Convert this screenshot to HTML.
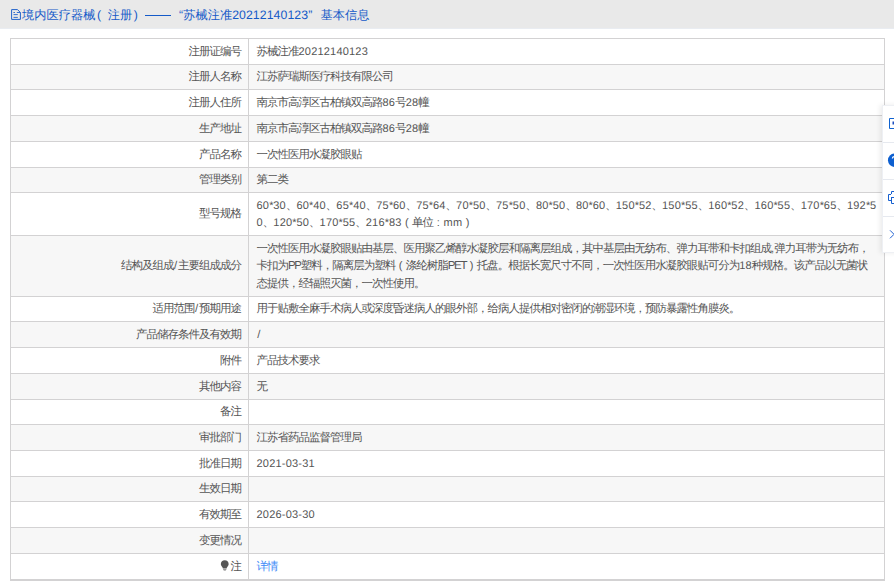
<!DOCTYPE html>
<html><head><meta charset="utf-8">
<style>
*{margin:0;padding:0;box-sizing:border-box}
html,body{width:894px;height:588px;overflow:hidden;background:#fff}
body{font-family:"Liberation Sans",sans-serif;color:#555;position:relative;text-rendering:geometricPrecision}
.hdr{position:absolute;left:0;top:0;width:894px;height:28px;background:#e9e9e9}
.hdrline{position:absolute;left:0;top:28px;width:894px;height:1px;background:#e9ecf1}
.title{position:absolute;left:11px;top:1px;height:28px;line-height:28px;color:#155ac8;white-space:nowrap}
.title span{display:inline-block;vertical-align:top}
.ficon{display:inline-block;vertical-align:top;margin-top:8px;margin-right:1px}
.hc{font-size:12.2px;letter-spacing:0.05px}
.hp{font-size:12.25px;width:12.25px;text-align:left;padding-left:1.5px}
.hd{width:26.5px;height:28px;background:linear-gradient(#155ac8,#155ac8) no-repeat 1px 14px / 26px 1px}
.hq{font-size:12.25px;width:12.25px}
.ha{font-size:12.25px;letter-spacing:0.1px}
.tbl{position:absolute;left:0;top:0;width:894px;height:588px}
.frame{position:absolute;left:10px;top:38px;width:875px;height:543px;border:1px solid #d3d2d3;border-bottom:2px solid #d3d2d3}
.r{position:absolute;left:10px;width:875px;border:1px solid #d3d2d3;border-bottom:none}
.r.g{background:#f7f7f7}
.l{position:absolute;left:0;top:0;bottom:0;width:238px;border-right:1px solid #d3d2d3;padding-right:7px;white-space:nowrap;display:flex;align-items:center;justify-content:flex-end}
.v{position:absolute;left:238px;top:0;bottom:0;right:0;padding-left:7.5px;white-space:nowrap;display:flex;align-items:center}
.ln{height:17.5px;line-height:17.5px;position:relative;top:-1.5px}
.c{font-size:11.5px;letter-spacing:-1.0px}
.a{font-size:11px;letter-spacing:0.2px}
.s{font-size:11px;letter-spacing:-0.15px}
.u{font-size:11.5px;letter-spacing:-1.3px}
.sl{font-size:11.5px;padding:0 0.7px}
.fp{display:inline-block;width:10.5px;text-align:center;font-size:11px}
.lk{color:#3d8af7}
.bulb{display:inline-block;vertical-align:-1px;margin-right:1px}
.side{position:absolute;left:882px;top:105px;width:40px;height:148px;background:#fff;box-shadow:-2px 0 5px rgba(0,0,0,0.08);border:1px solid #eef0f4}
.side div{position:absolute;left:0;width:40px;height:1px;background:#e6e9ef}
.side svg{position:absolute}
</style></head><body>
<div class="hdr"></div><div class="hdrline"></div>
<div class="title"><svg class="ficon" width="10" height="11" viewBox="0 0 10 11"><path d="M0.6 0.6h5.9l2.9 2.9v6.9H0.6z" fill="none" stroke="#155ac8" stroke-width="0.95"/><path d="M2.4 3.5h1.6M5.8 3.5h3.4M2.5 5.6h4.3M2.5 8.4h4.3" stroke="#155ac8" stroke-width="0.85"/></svg><span class="hc">境内医疗器械</span><span class="hp">(</span><span class="hc">注册</span><span class="hp">)</span><span class="hd"></span><span class="hq" style="text-align:right">“</span><span class="hc">苏械注准</span><span class="ha">20212140123</span><span class="hq" style="text-align:left">”</span><span class="hc">基本信息</span></div>
<div class="tbl">
<div class="r" style="top:38px;height:27px"><div class="l"><div class="ln"><span class="c">注册证编号</span></div></div><div class="v"><div><div class="ln"><span class="c">苏械注准</span><span class="a">20212140123</span></div></div></div></div>
<div class="r g" style="top:64px;height:26px"><div class="l"><div class="ln"><span class="c">注册人名称</span></div></div><div class="v"><div><div class="ln"><span class="c">江苏萨瑞斯医疗科技有限公司</span></div></div></div></div>
<div class="r" style="top:89px;height:27px"><div class="l"><div class="ln"><span class="c">注册人住所</span></div></div><div class="v"><div><div class="ln"><span class="c">南京市高淳区古柏镇双高路</span><span class="a">86</span><span class="c">号</span><span class="a">28</span><span class="c">幢</span></div></div></div></div>
<div class="r g" style="top:115px;height:27px"><div class="l"><div class="ln"><span class="c">生产地址</span></div></div><div class="v"><div><div class="ln"><span class="c">南京市高淳区古柏镇双高路</span><span class="a">86</span><span class="c">号</span><span class="a">28</span><span class="c">幢</span></div></div></div></div>
<div class="r" style="top:141px;height:27px"><div class="l"><div class="ln"><span class="c">产品名称</span></div></div><div class="v"><div><div class="ln"><span class="c">一次性医用水凝胶眼贴</span></div></div></div></div>
<div class="r g" style="top:167px;height:26px"><div class="l"><div class="ln"><span class="c">管理类别</span></div></div><div class="v"><div><div class="ln"><span class="c">第二类</span></div></div></div></div>
<div class="r" style="top:192px;height:44px"><div class="l"><div class="ln"><span class="c">型号规格</span></div></div><div class="v"><div><div class="ln"><span class="a">60</span><span class="s">*</span><span class="a">30</span><span class="c">、</span><span class="a">60</span><span class="s">*</span><span class="a">40</span><span class="c">、</span><span class="a">65</span><span class="s">*</span><span class="a">40</span><span class="c">、</span><span class="a">75</span><span class="s">*</span><span class="a">60</span><span class="c">、</span><span class="a">75</span><span class="s">*</span><span class="a">64</span><span class="c">、</span><span class="a">70</span><span class="s">*</span><span class="a">50</span><span class="c">、</span><span class="a">75</span><span class="s">*</span><span class="a">50</span><span class="c">、</span><span class="a">80</span><span class="s">*</span><span class="a">50</span><span class="c">、</span><span class="a">80</span><span class="s">*</span><span class="a">60</span><span class="c">、</span><span class="a">150</span><span class="s">*</span><span class="a">52</span><span class="c">、</span><span class="a">150</span><span class="s">*</span><span class="a">55</span><span class="c">、</span><span class="a">160</span><span class="s">*</span><span class="a">52</span><span class="c">、</span><span class="a">160</span><span class="s">*</span><span class="a">55</span><span class="c">、</span><span class="a">170</span><span class="s">*</span><span class="a">65</span><span class="c">、</span><span class="a">192</span><span class="s">*</span><span class="a">5</span></div><div class="ln"><span class="a">0</span><span class="c">、</span><span class="a">120</span><span class="s">*</span><span class="a">50</span><span class="c">、</span><span class="a">170</span><span class="s">*</span><span class="a">55</span><span class="c">、</span><span class="a">216</span><span class="s">*</span><span class="a">83</span><span class="fp">(</span><span class="c">单位</span><span class="fp">:</span><span class="a">mm</span><span class="fp">)</span></div></div></div></div>
<div class="r g" style="top:235px;height:62px"><div class="l"><div class="ln"><span class="c">结构及组成</span><span class="sl">/</span><span class="c">主要组成成分</span></div></div><div class="v"><div><div class="ln"><span class="c">一次性医用水凝胶眼贴由基层、医用聚乙烯醇水凝胶层和隔离层组成，其中基层由无纺布、弹力耳带和卡扣组成</span><span class="a">,</span><span class="c">弹力耳带为无纺布，</span></div><div class="ln"><span class="c">卡扣为</span><span class="u">PP</span><span class="c">塑料，隔离层为塑料</span><span class="fp">(</span><span class="c">涤纶树脂</span><span class="u">PET</span><span class="fp">)</span><span class="c">托盘。根据长宽尺寸不同，一次性医用水凝胶眼贴可分为</span><span class="a">18</span><span class="c">种规格。该产品以无菌状</span></div><div class="ln"><span class="c">态提供，经辐照灭菌，一次性使用。</span></div></div></div></div>
<div class="r" style="top:296px;height:26px"><div class="l"><div class="ln"><span class="c">适用范围</span><span class="sl">/</span><span class="c">预期用途</span></div></div><div class="v"><div><div class="ln"><span class="c">用于贴敷全麻手术病人或深度昏迷病人的眼外部，给病人提供相对密闭的潮湿环境，预防暴露性角膜炎。</span></div></div></div></div>
<div class="r g" style="top:321px;height:27px"><div class="l"><div class="ln"><span class="c">产品储存条件及有效期</span></div></div><div class="v"><div><div class="ln"><span class="sl">/</span></div></div></div></div>
<div class="r" style="top:347px;height:27px"><div class="l"><div class="ln"><span class="c">附件</span></div></div><div class="v"><div><div class="ln"><span class="c">产品技术要求</span></div></div></div></div>
<div class="r g" style="top:373px;height:27px"><div class="l"><div class="ln"><span class="c">其他内容</span></div></div><div class="v"><div><div class="ln"><span class="c">无</span></div></div></div></div>
<div class="r" style="top:399px;height:26px"><div class="l"><div class="ln"><span class="c">备注</span></div></div><div class="v"><div></div></div></div>
<div class="r g" style="top:424px;height:27px"><div class="l"><div class="ln"><span class="c">审批部门</span></div></div><div class="v"><div><div class="ln"><span class="c">江苏省药品监督管理局</span></div></div></div></div>
<div class="r" style="top:450px;height:27px"><div class="l"><div class="ln"><span class="c">批准日期</span></div></div><div class="v"><div><div class="ln"><span class="a">2021-03-31</span></div></div></div></div>
<div class="r g" style="top:476px;height:26px"><div class="l"><div class="ln"><span class="c">生效日期</span></div></div><div class="v"><div></div></div></div>
<div class="r" style="top:501px;height:27px"><div class="l"><div class="ln"><span class="c">有效期至</span></div></div><div class="v"><div><div class="ln"><span class="a">2026-03-30</span></div></div></div></div>
<div class="r g" style="top:527px;height:27px"><div class="l"><div class="ln"><span class="c">变更情况</span></div></div><div class="v"><div></div></div></div>
<div class="r" style="top:553px;height:27px"><div class="l"><div class="ln"><svg class="bulb" width="9.5" height="11" viewBox="0 0 9 11"><path d="M4.5 0.3C2.2 0.3 0.6 2 0.6 4.1c0 1.5 0.9 2.4 1.5 3.2 0.3 0.4 0.5 0.8 0.5 1.3h3.8c0-0.5 0.2-0.9 0.5-1.3 0.6-0.8 1.5-1.7 1.5-3.2C8.4 2 6.8 0.3 4.5 0.3z" fill="#555"/><path d="M2.9 9.2h3.2v0.7H2.9zM3.4 10.2h2.2v0.5H3.4z" fill="#777"/></svg><span class="c">注</span></div></div><div class="v"><div><div class="ln"><span class="c lk">详情</span></div></div></div></div>
<div class="frame"></div>
</div>
<div class="side">
<div style="top:36px"></div><div style="top:73px"></div><div style="top:110px"></div>
<svg style="left:5px;top:11px" width="14" height="14" viewBox="0 0 14 14"><path d="M1.5 1.5h11v10h-11z" fill="none" stroke="#0f62d0" stroke-width="1"/><path d="M4.5 4.5h4v3h-4z" fill="#1d4fc0"/></svg>
<svg style="left:4px;top:47px" width="16" height="16" viewBox="0 0 16 16"><circle cx="7.6" cy="7.25" r="6.65" fill="#0d5fd0"/><path d="M5.4 5.5c0-1.3 1-2 2.2-2 1.2 0 2.1.8 2.1 1.8 0 1.3-1.6 1.5-1.6 2.8" fill="none" stroke="#fff" stroke-width="1.3"/><circle cx="8" cy="10.6" r="0.8" fill="#fff"/></svg>
<svg style="left:5px;top:85px" width="14" height="14" viewBox="0 0 14 14"><path d="M3.5 3V0.5H12M3 3.5H0.5V9.5H3M3.5 6.5H12M3.5 6V12.5H12" fill="none" stroke="#1660d0" stroke-width="1"/></svg>
<svg style="left:5px;top:122px" width="14" height="14" viewBox="0 0 14 14"><path d="M2 2.3l4 4-4 4" fill="none" stroke="#1d5fd0" stroke-width="1"/></svg>
</div>
</body></html>
